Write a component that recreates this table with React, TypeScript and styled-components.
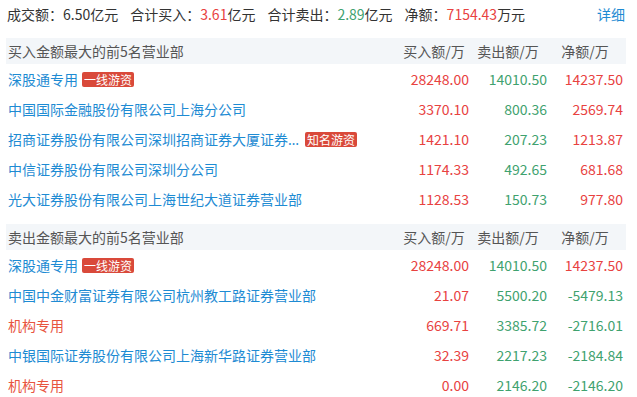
import React from "react";
import styled, { createGlobalStyle } from "styled-components";

const GlobalStyle = createGlobalStyle`
  body {
    margin: 0;
    background: #fff;
    font-family: "Noto Sans CJK SC", "Noto Sans", sans-serif;
    font-size: 14px;
    color: #333;
  }
`

const Wrapper = styled.div`
  width: 620px;
  margin-left: 6px;
`

const Summary = styled.div`
  display: flex;
  align-items: center;
  height: 28px;
  padding-left: 1px;
  margin-bottom: 10px;
  white-space: nowrap;
`

const SummaryItem = styled.span`
  margin-right: 12px;
`

const Num = styled.span<{ $tone: "up" | "down" }>`
  color: ${props => props.$tone === "up" ? "#e8423f" : "#3fa26f"};
`

const More = styled.a`
  margin-left: auto;
  margin-right: 1px;
  color: #1e8bd3;
  text-decoration: none;
`

const Section = styled.section`
  margin-bottom: 10px;
`

const Grid = styled.div<{ $head?: boolean }>`
  display: grid;
  grid-template-columns: 1fr 70px 78px 76px;
  padding: 0 3px 0 2px;
  height: ${props => props.$head ? "26px" : "30px"};
  align-items: center;
  background: ${props => props.$head ? "#f3f6f9" : "transparent"};
  color: ${props => props.$head ? "#555" : "#333"};
`

const HeadCell = styled.div`
  text-align: center;
  white-space: nowrap;
`

const NameCell = styled.div`
  display: flex;
  align-items: center;
  min-width: 0;
`

const Name = styled.span<{ $org?: boolean, $clip?: boolean }>`
  font-family: "Noto Sans", "Noto Sans CJK SC", sans-serif;
  color: ${props => props.$org ? "#e8553f" : "#1e8bd3"};
  max-width: ${props => props.$clip ? "293px" : "none"};
  overflow: hidden;
  text-overflow: ellipsis;
  white-space: nowrap;
`

const Badge = styled.span`
  margin-left: 4px;
  height: 15px;
  line-height: 15px;
  padding: 0 2px;
  border-radius: 2px;
  background: #d9493a;
  color: #fff;
  font-size: 12px;
  white-space: nowrap;
`

const Value = styled.div<{ $tone: "up" | "down" }>`
  text-align: right;
  color: ${props => props.$tone === "up" ? "#e8423f" : "#3fa26f"};
`

type Row = {
  name: string;
  badge?: string;
  org?: boolean;
  buy: string;
  sell: string;
  net: string;
}

const buyRows: Row[] = [
  {name: "深股通专用", badge: "一线游资", buy: "28248.00", sell: "14010.50", net: "14237.50"},
  {name: "中国国际金融股份有限公司上海分公司", buy: "3370.10", sell: "800.36", net: "2569.74"},
  {name: "招商证券股份有限公司深圳招商证券大厦证券营业部", badge: "知名游资", buy: "1421.10", sell: "207.23", net: "1213.87"},
  {name: "中信证券股份有限公司深圳分公司", buy: "1174.33", sell: "492.65", net: "681.68"},
  {name: "光大证券股份有限公司上海世纪大道证券营业部", buy: "1128.53", sell: "150.73", net: "977.80"},
]

const sellRows: Row[] = [
  {name: "深股通专用", badge: "一线游资", buy: "28248.00", sell: "14010.50", net: "14237.50"},
  {name: "中国中金财富证券有限公司杭州教工路证券营业部", buy: "21.07", sell: "5500.20", net: "-5479.13"},
  {name: "机构专用", org: true, buy: "669.71", sell: "3385.72", net: "-2716.01"},
  {name: "中银国际证券股份有限公司上海新华路证券营业部", buy: "32.39", sell: "2217.23", net: "-2184.84"},
  {name: "机构专用", org: true, buy: "0.00", sell: "2146.20", net: "-2146.20"},
]

const tone = (v: string) => v.startsWith("-") ? "down" : "up";

const Table = ({title, rows}: {title: string, rows: Row[]}) => (
  <Section>
    <Grid $head>
      <div>{title}</div>
      <HeadCell>买入额/万</HeadCell>
      <HeadCell>卖出额/万</HeadCell>
      <HeadCell>净额/万</HeadCell>
    </Grid>
    {rows.map((row, i) => (
      <Grid key={i}>
        <NameCell>
          <Name $org={row.org} $clip={!!row.badge}>{row.name}</Name>
          {row.badge && <Badge>{row.badge}</Badge>}
        </NameCell>
        <Value $tone="up">{row.buy}</Value>
        <Value $tone="down">{row.sell}</Value>
        <Value $tone={tone(row.net)}>{row.net}</Value>
      </Grid>
    ))}
  </Section>
)

export default function App() {
  return (
    <Wrapper>
      <GlobalStyle/>
      <Summary>
        <SummaryItem>成交额：6.50亿元</SummaryItem>
        <SummaryItem>合计买入：<Num $tone="up">3.61</Num>亿元</SummaryItem>
        <SummaryItem>合计卖出：<Num $tone="down">2.89</Num>亿元</SummaryItem>
        <SummaryItem>净额：<Num $tone="up">7154.43</Num>万元</SummaryItem>
        <More href="#">详细</More>
      </Summary>
      <Table title="买入金额最大的前5名营业部" rows={buyRows}/>
      <Table title="卖出金额最大的前5名营业部" rows={sellRows}/>
    </Wrapper>
  )
}
